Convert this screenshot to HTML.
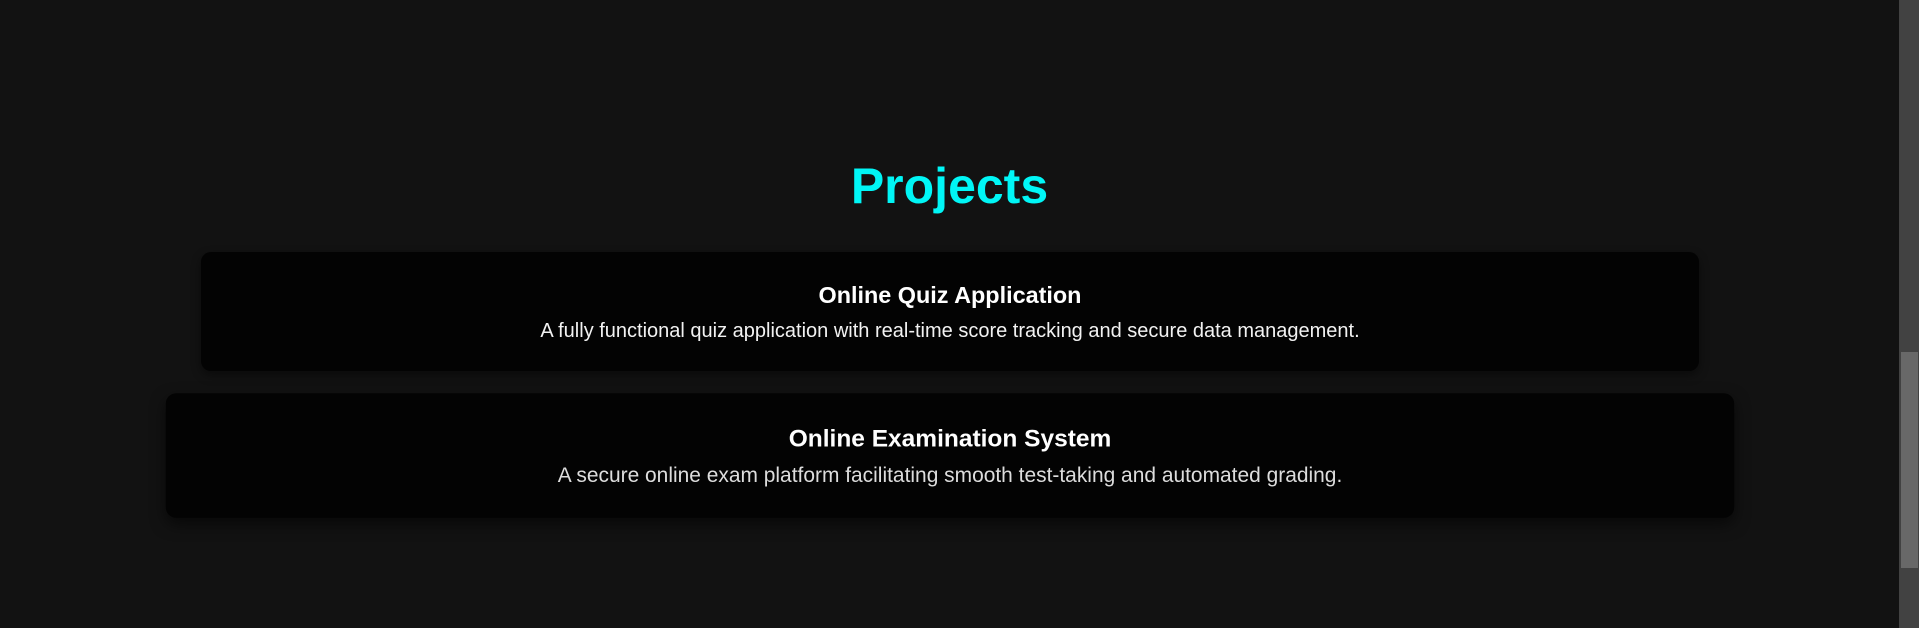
<!DOCTYPE html>
<html><head><style>
html,body{margin:0;padding:0;}
body{width:1919px;height:628px;background:#121212;overflow:hidden;position:relative;font-family:"Liberation Sans",Arial,sans-serif;}
h2{position:absolute;left:0;width:1899px;top:158px;margin:0;text-align:center;color:#00f6f6;font-size:50px;font-weight:bold;line-height:57px;}
.card{position:absolute;left:201px;width:1498px;height:119px;background:#030303;border-radius:10px;box-shadow:0 4px 10px rgba(0,0,0,.45);color:#fff;text-align:center;}
.t{position:absolute;left:0;right:0;top:30px;font-size:23.4px;font-weight:bold;line-height:26px;}
.d{position:absolute;left:0;right:0;top:68px;font-size:20px;line-height:23px;color:#f2f2f2;}
.sb{position:absolute;left:1899px;top:0;width:20px;height:628px;background:#424242;}
.th{position:absolute;left:1901px;top:352px;width:17px;height:216px;background:#686868;}
</style></head><body>
<h2>Projects</h2>
<div class="card" style="top:252px"><div class="t">Online Quiz Application</div><div class="d">A fully functional quiz application with real-time score tracking and secure data management.</div></div>
<div class="card" style="top:396px;transform:scale(1.047);box-shadow:0 6px 14px rgba(0,0,0,.55)"><div class="t">Online Examination System</div><div class="d" style="color:#ddd">A secure online exam platform facilitating smooth test-taking and automated grading.</div></div>
<div class="sb"></div><div class="th"></div>
</body></html>
